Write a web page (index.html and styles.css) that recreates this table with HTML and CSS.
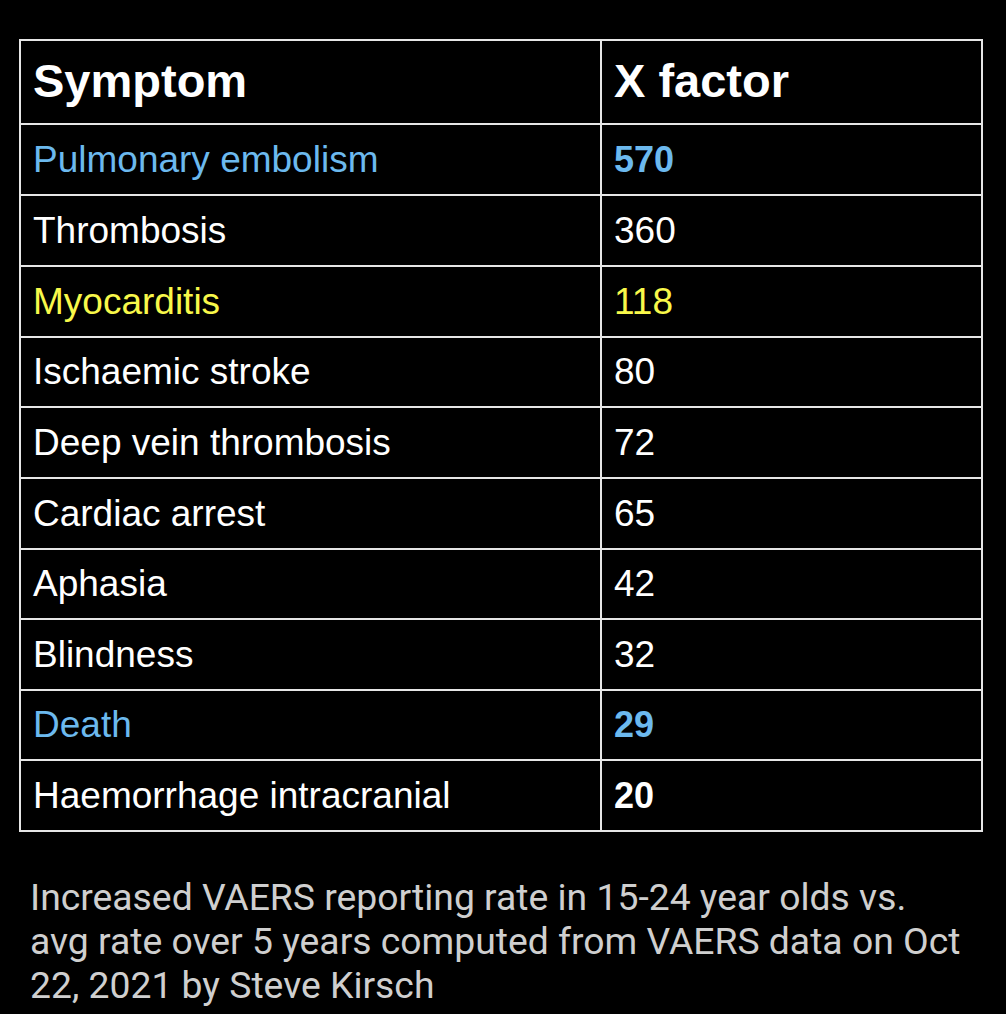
FILE: index.html
```html
<!DOCTYPE html>
<html>
<head>
<meta charset="utf-8">
<link rel="stylesheet" href="styles.css">
</head>
<body>
<div class="page">
  <table class="xtable">
    <thead>
      <tr><th class="c1">Symptom</th><th class="c2">X factor</th></tr>
    </thead>
    <tbody>
      <tr class="blue"><td>Pulmonary embolism</td><td class="b">570</td></tr>
      <tr><td>Thrombosis</td><td>360</td></tr>
      <tr class="yellow"><td>Myocarditis</td><td>118</td></tr>
      <tr class="short"><td>Ischaemic stroke</td><td>80</td></tr>
      <tr><td>Deep vein thrombosis</td><td>72</td></tr>
      <tr><td>Cardiac arrest</td><td>65</td></tr>
      <tr class="short"><td>Aphasia</td><td>42</td></tr>
      <tr><td>Blindness</td><td>32</td></tr>
      <tr class="blue short"><td>Death</td><td class="b">29</td></tr>
      <tr><td>Haemorrhage intracranial</td><td class="b">20</td></tr>
    </tbody>
  </table>
  <p class="caption">Increased VAERS reporting rate in 15-24 year olds vs. avg rate over 5 years computed from VAERS data on Oct 22, 2021 by Steve Kirsch</p>
</div>
</body>
</html>
```
FILE: styles.css
```css
html, body {
  margin: 0;
  padding: 0;
  background: #000;
}
.page {
  width: 1006px;
  height: 1014px;
  background: #000;
  padding: 39px 0 0 19px;
  box-sizing: border-box;
  overflow: hidden;
}
.xtable {
  border-collapse: collapse;
  width: 964px;
  font-family: "Liberation Sans", Arial, sans-serif;
  color: #fff;
  margin: 0;
}
.xtable th, .xtable td {
  border: 2px solid #e6e6e6;
  text-align: left;
  vertical-align: middle;
  padding: 0 0 0 12px;
}
.xtable th {
  font-size: 47px;
  font-weight: bold;
  height: 78px;
  padding-top: 0;
  padding-bottom: 4px;
}
.xtable td {
  font-size: 37px;
  height: 67px;
  padding-top: 1px;
  padding-bottom: 1px;
}
.xtable tr.short td {
  height: 66px;
}
.xtable .c1 {
  width: 567px;
}
.xtable td.b {
  font-weight: bold;
  font-size: 36px;
}
.blue td { color: #6cb9ee; }
.yellow td { color: #f8f84a; }
.caption {
  font-family: Roboto, "Noto Sans", sans-serif;
  color: #cfcfcf;
  font-size: 37.3px;
  line-height: 44px;
  margin: 43px 0 0 11px;
  width: 935px;
}
```
